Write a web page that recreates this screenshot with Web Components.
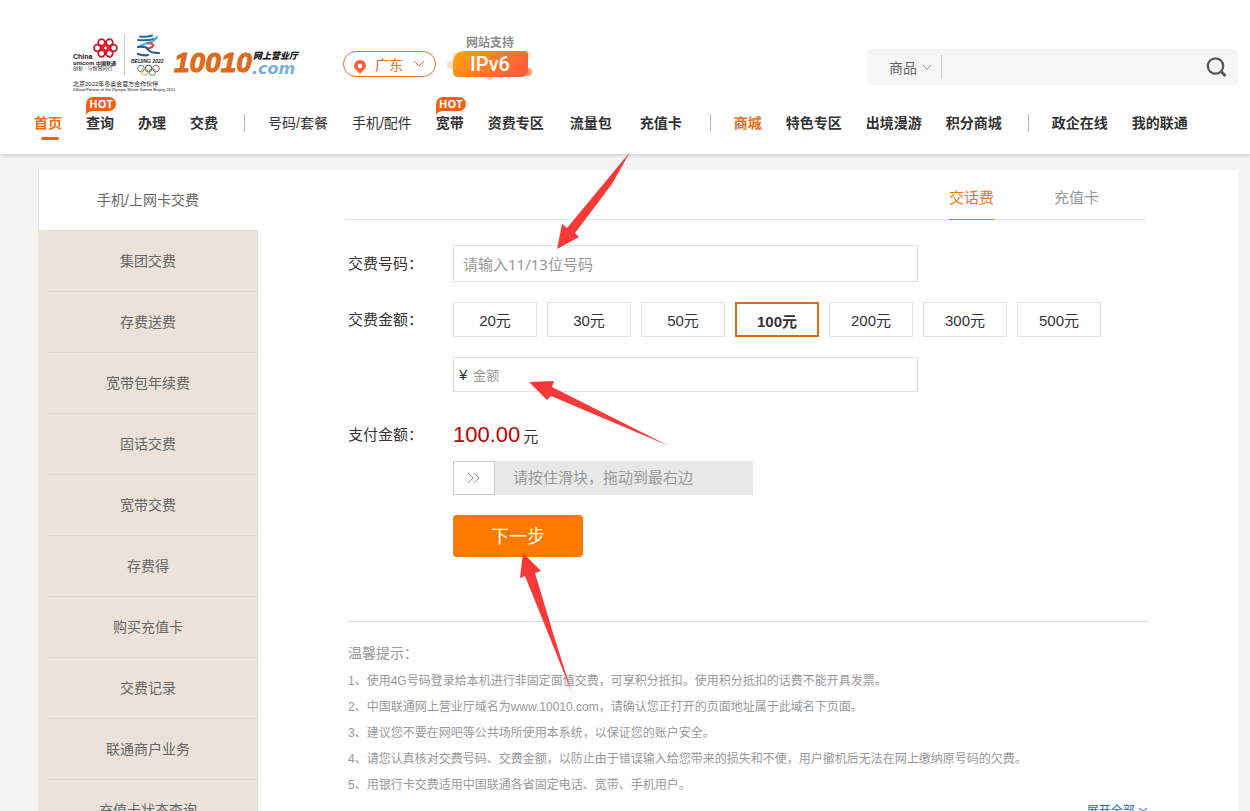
<!DOCTYPE html>
<html lang="zh-CN">
<head>
<meta charset="utf-8">
<title>中国联通网上营业厅 - 交费充值</title>
<style>
html{scrollbar-width:none}
body{margin:0;position:relative;background:#f4f4f4;color:#333;font:14px/20px "Liberation Sans","Noto Sans CJK SC",sans-serif}
</style>
</head>
<body>
<site-header></site-header>
<pay-layout>
  <side-menu slot="side"></side-menu>
  <pay-tabs></pay-tabs>
  <pay-form></pay-form>
  <pay-tips></pay-tips>
</pay-layout>
<guide-arrows></guide-arrows>

<script>
const define = (name, html, ready) => customElements.define(name, class extends HTMLElement {
  constructor() {
    super();
    const t = document.createElement('template');
    t.innerHTML = html;
    this.attachShadow({mode: 'open'}).append(t.content.cloneNode(true));
  }
  connectedCallback() { if (ready) ready(this.shadowRoot, this); }
});

define('brand-logo', `
<style>
:host{display:flex;align-items:flex-start}
.rings{display:block;overflow:visible}
.site{display:grid;grid-template-columns:auto auto;column-gap:1px;margin:18px 0 0 6px;text-decoration:none}
.num{grid-row:1 / 3;font:italic bold 28px/26px "Liberation Sans",sans-serif;color:#dd6b18;-webkit-text-stroke:1px #dd6b18}
.cn{font:italic 900 9px/12px "Noto Sans CJK SC",sans-serif;color:#111}
.com{font:italic bold 16px/14px "DejaVu Sans",sans-serif;color:#78aeda;margin-left:-1px}
</style>
<svg class="rings" width="96" height="62" viewBox="72 32 96 62" role="img" aria-label="中国联通 北京2022">
  <g fill="none" stroke="#d8142c" stroke-width="1.7">
    <circle cx="101.500" cy="42.500" r="3.300"/><circle cx="109.500" cy="42.500" r="3.300"/>
    <circle cx="97.300" cy="48" r="3.300"/><circle cx="113.700" cy="48" r="3.300"/>
    <circle cx="101.500" cy="53.500" r="3.300"/><circle cx="109.500" cy="53.500" r="3.300"/>
    <path d="M100 45l5.500 6 5.500-6M100 51l5.500-6 5.500 6M105.500 41v3M105.500 52v3"/>
  </g>
  <g fill="#222" font-family="Liberation Sans, Noto Sans CJK SC, sans-serif" font-weight="bold">
    <text x="73" y="59" font-size="7">China</text>
    <text x="73" y="65" font-size="6">unicom</text>
    <text x="96" y="65" font-size="5" font-family="Noto Sans CJK SC">中国联通</text>
    <text x="73" y="70" font-size="5" font-weight="normal">创新 · 与智慧同行</text>
    <text x="131" y="63" font-size="5" font-style="italic">BEIJING 2022</text>
    <text x="73" y="86" font-size="6" font-weight="normal">北京2022年冬奥会官方合作伙伴</text>
    <text x="73" y="91" font-size="4" font-weight="normal" font-family="Roboto">Official Partner of the Olympic Winter Games Beijing 2022</text>
  </g>
  <path d="M124.500 34v41" stroke="#ccc"/>
  <g fill="none" stroke-linecap="round">
    <path d="M140 36.500q7 1 12-1M138 40q9 1 16-1" stroke="#2468b4" stroke-width="2"/>
    <path d="M157 37q-3 5-9 6l-8 3" stroke="#48b6ce" stroke-width="2.400"/>
    <path d="M148 43q8 1 4 4l-5 2" stroke="#e84048" stroke-width="2"/>
    <path d="M138 47q8-1 10 2 1 4 11 4M138 54q6 2 10 1" stroke="#2458a8" stroke-width="2.200"/>
  </g>
  <g fill="none" stroke-width="1">
    <circle cx="141" cy="68.500" r="3.300" stroke="#3c80c0"/><circle cx="148.500" cy="68.500" r="3.300" stroke="#444"/><circle cx="156" cy="68.500" r="3.300" stroke="#d84850"/>
    <circle cx="144.700" cy="72" r="3.300" stroke="#e0ac38"/><circle cx="152.300" cy="72" r="3.300" stroke="#38a068"/>
  </g>
</svg>
<a class="site" href="#"><span class="num">10010</span><span class="cn">网上营业厅</span><span class="com">.com</span></a>`);

define('province-picker', `
<style>
:host{display:block}
button{display:flex;align-items:center;width:93px;height:26px;padding:0 10px;border:1px solid #e0703a;border-radius:13px;background:#fff;color:#e4682a;font:14px/20px "Noto Sans CJK SC",sans-serif;cursor:pointer}
span{margin:0 auto 0 9px}
.pin{margin-top:6px}
</style>
<button type="button"><svg class="pin" width="12" height="14" viewBox="0 0 12 14"><path fill="#f4633a" fill-rule="evenodd" d="M6 0a6 6 0 0 1 6 6c0 3-3 4.500-6 8-3-3.500-6-5-6-8a6 6 0 0 1 6-6zm0 3.800a2.200 2.200 0 1 0 0 4.400 2.200 2.200 0 0 0 0-4.400z"/></svg><span>广东</span><svg width="12" height="8" viewBox="0 0 12 8"><path d="M1 1l5 5 5-5" fill="none" stroke="#e0703a"/></svg></button>`);

define('ipv6-badge', `
<style>
:host{display:grid;justify-items:center;width:88px}
small{font:bold 12px/18px "Noto Sans CJK SC",sans-serif;color:#8c8c8c}
.b{display:grid;width:100%;height:31px}
svg,b{grid-area:1 / 1}
b{justify-self:center;font:500 20px/26px Roboto,sans-serif;color:#fff}
</style>
<small>网站支持</small>
<div class="b"><svg width="88" height="31" viewBox="0 0 88 31"><defs><linearGradient id="g" x2="1" y2=".4"><stop stop-color="#ffa60c"/><stop offset="1" stop-color="#ff5f3a"/></linearGradient></defs>
<g fill="#ffc99a"><circle cx="5" cy="14" r="4" opacity=".6"/><circle cx="8" cy="4" r="3" opacity=".3"/><circle cx="81" cy="4" r="4" opacity=".5"/><circle cx="82" cy="21" r="4" fill="#ff9a62"/><circle cx="44" cy="26" r="3"/></g>
<path fill="url(#g)" d="M19 0h59q4 0 4 4v15q0 7-7 7H12q-5 0-5-5v-8Q7 0 19 0z"/></svg><b>IPv6</b></div>`);

define('search-box', `
<style>
:host{display:block;width:371px}
form{display:flex;align-items:center;height:36px;background:#f6f6f6;border-radius:5px;margin:0}
.cat{display:grid;align-items:center;margin-left:22px;width:52px;height:24px;border-right:1px solid #ccc}
.cat>*{grid-area:1 / 1}
select{appearance:none;border:0;padding:0;margin:0;background:none;color:#666;font:14px/22px "Noto Sans CJK SC",sans-serif;width:44px}
.cat svg{justify-self:end;margin-right:9px;pointer-events:none}
input{flex:1;min-width:0;border:0;background:none;padding:0 10px;font:14px/22px "Liberation Sans",sans-serif;outline:0}
button{display:flex;border:0;background:none;padding:0;margin-right:11px;cursor:pointer}
</style>
<form role="search"><div class="cat"><select aria-label="搜索类别"><option>商品</option></select><svg width="10" height="7" viewBox="0 0 10 7"><path d="M1 1l4 4.500L9 1" fill="none" stroke="#999"/></svg></div>
<input type="text" aria-label="搜索"><button type="button" aria-label="搜索"><svg width="21" height="21" viewBox="0 0 21 21"><g fill="none" stroke="#555" stroke-width="2.200"><circle cx="9.500" cy="9" r="7.700"/><path d="M15 14.500l4.500 4.500" stroke-width="3"/></g></svg></button></form>`);

define('nav-item', `
<style>
:host{display:block;position:relative;font:bold 14px/20px "Liberation Sans","Noto Sans CJK SC",sans-serif;color:#333}
:host([plain]){font-weight:normal}
:host([accent]),:host([current]){color:#f26a10}
a{color:inherit;text-decoration:none;white-space:nowrap}
:host([current]) a::after{content:"";position:absolute;left:7px;bottom:-7px;width:18px;height:3px;border-radius:2px;background:#ee6413}
.hot{display:none;position:absolute;left:0;top:-16px;width:30px;height:18px}
:host([hot]) .hot{display:grid}
.hot>*{grid-area:1 / 1}
.hot b{font:bold 11px/14px "Open Sans",sans-serif;color:#fff;text-align:center}
</style>
<a href="#"><slot></slot></a><span class="hot"></span>`, (r, el) => {
  if (el.hasAttribute('hot')) r.querySelector('.hot').innerHTML = '<svg width="30" height="18" viewBox="0 0 30 18"><path fill="#fa5f0c" d="M7 0h16a7 7 0 0 1 0 14H8q-6 0-8 4V7a7 7 0 0 1 7-7z"/></svg><b>HOT</b>';
});

define('site-header', `
<style>
:host{display:block;position:relative;background:#fff;box-shadow:0 2px 3px rgba(0,0,0,.14)}
.top{display:flex;align-items:flex-start;height:81px;padding:32px 12px 0 72px}
brand-logo{width:226px}
province-picker{margin:19px 0 0 45px}
ipv6-badge{margin:1px 0 0 10px}
search-box{margin:17px 0 0 auto}
nav{display:flex;align-items:center;gap:24px;height:20px;padding:0 0 21px 34px}
i{width:1px;height:18px;background:#bbb;margin:0 -1px 0 2px}
.mid{display:flex;gap:28px;margin:0 2px}
</style>
<div class="top"><brand-logo></brand-logo><province-picker></province-picker><ipv6-badge></ipv6-badge><search-box></search-box></div>
<nav><nav-item current>首页</nav-item><nav-item hot>查询</nav-item><nav-item>办理</nav-item><nav-item>交费</nav-item><i></i>
<nav-item plain>号码/套餐</nav-item><nav-item plain>手机/配件</nav-item><nav-item hot>宽带</nav-item><nav-item>资费专区</nav-item><div class="mid"><nav-item>流量包</nav-item><nav-item>充值卡</nav-item></div><i></i>
<nav-item accent>商城</nav-item><nav-item>特色专区</nav-item><nav-item>出境漫游</nav-item><nav-item>积分商城</nav-item><i></i>
<nav-item>政企在线</nav-item><nav-item>我的联通</nav-item></nav>`);

define('pay-layout', `
<style>
:host{display:block;padding:16px 12px 40px 38px}
main{display:flex;background:#fff}
aside{flex:none;width:220px}
section{flex:1;min-width:0;padding:0 90px 40px 87px}
</style>
<main><aside><slot name="side"></slot></aside><section><slot></slot></section></main>`);

define('side-menu', `
<style>
:host{display:block}
ul{list-style:none;margin:0;padding:0;background:#ebe3d9}
li{padding-left:10px}
a{display:block;padding-right:10px;border-top:1px solid #dfd6cb;line-height:60px;text-align:center;color:#666;text-decoration:none}
.on{background:#fff;box-shadow:inset 1px 0 #e4e4e4}
.on a{border:0}
</style><ul></ul>`, r => {
  r.querySelector('ul').innerHTML = ['手机/上网卡交费','集团交费','存费送费','宽带包年续费','固话交费','宽带交费','存费得','购买充值卡','交费记录','联通商户业务','充值卡状态查询']
    .map((t, i) => `<li${i ? '' : ' class="on"'}><a href="#">${t}</a></li>`).join('');
});

define('pay-tabs', `
<style>
:host{display:block;margin-right:3px}
nav{display:flex;justify-content:flex-end;gap:60px;height:49px;padding-right:46px;border-bottom:1px solid #e5e5e5}
a{font-size:15px;line-height:56px;height:49px;color:#999;text-decoration:none}
.on{color:#f0750f;border-bottom:1px solid #e8700f}
</style><nav><a class="on" href="#">交话费</a><a href="#">充值卡</a></nav>`);

define('pay-form', `
<style>
:host{display:block;margin-left:3px;padding:25px 0 64px;border-bottom:1px solid #e0e0e0}
form{display:grid;grid-template-columns:105px 1fr;row-gap:20px;margin:0;font-size:15px}
.l{align-self:center;color:#333}
.c{grid-column:2}
input[type=text]{box-sizing:border-box;width:100%;border:0;background:none;outline:0;font:15px/20px "Noto Sans","Noto Sans CJK SC",sans-serif;color:#333;padding:0}
input::placeholder{color:#999;opacity:1}
.box{box-sizing:border-box;display:flex;align-items:center;max-width:465px;height:37px;border:1px solid #e0e0e0;padding:0 9px}
.sum{height:35px;padding:0 5px;gap:6px}
.sum input{font-size:13px}
.opts{display:flex;gap:10px}
.opts label{box-sizing:border-box;width:84px;height:35px;border:1px solid #e5e5e5;line-height:35px;text-align:center;cursor:pointer}
.opts input{appearance:none;position:absolute;margin:0;width:0;height:0}
.opts label:has(:checked){border:2px solid #dd6b18;font-weight:bold}
.total{box-sizing:border-box;height:29px;padding-top:8px;line-height:29px}
.pay{display:flex;align-items:baseline;gap:3px}
.pay output{font-size:22px;color:#c00000}
.drag{display:grid;align-items:center;width:300px;height:34px;background:#e8e8e8}
.drag>*{grid-area:1 / 1}
.drag label{color:#999;padding-left:60px;pointer-events:none}
.drag input{appearance:none;width:100%;height:34px;margin:0;background:none}
.drag input::-webkit-slider-thumb{appearance:none;box-sizing:border-box;width:42px;height:34px;background:#fff;border:1px solid #ccc}
.drag svg{margin-left:14px;pointer-events:none;z-index:1}
button{width:130px;height:42px;padding:0 0 3px;border:0;border-radius:4px;background:#ff7800;color:#fff;font:18px/24px "Noto Sans CJK SC",sans-serif;cursor:pointer}
</style>
<form>
<label class="l" for="phone">交费号码：</label><div class="box"><input id="phone" type="text" placeholder="请输入11/13位号码"></div>
<span class="l" id="al">交费金额：</span><div class="opts" role="radiogroup" aria-labelledby="al"></div>
<label class="c box sum"><span>¥</span><input type="text" placeholder="金额" aria-label="金额"></label>
<span class="l total">支付金额：</span><div class="pay total"><output>100.00</output><span>元</span></div>
<div class="c drag"><input id="drag" type="range" min="0" max="100" value="0"><label for="drag">请按住滑块，拖动到最右边</label><svg width="14" height="12" viewBox="0 0 14 12"><path d="M1 1l5 5-5 5M7 1l5 5-5 5" fill="none" stroke="#999"/></svg></div>
<div class="c"><button type="button">下一步</button></div>
</form>`, r => {
  r.querySelector('.opts').innerHTML = [20, 30, 50, 100, 200, 300, 500]
    .map(n => `<label><input type="radio" name="amount" value="${n}"${n === 100 ? ' checked' : ''}>${n}元</label>`).join('');
  r.querySelector('.opts').addEventListener('change', e => { r.querySelector('output').value = Number(e.target.value).toFixed(2); });
});

define('pay-tips', `
<style>
:host{display:block;margin-left:3px;padding-top:18px;color:#999}
h2{margin:0;font-size:14px;line-height:26px;font-weight:normal}
ul{list-style:none;margin:2px 0 0;padding:0;font-size:12px;line-height:26px}
div{display:flex;justify-content:flex-end}
a{font-size:12px;line-height:26px;color:#2a5cc0;text-decoration:none}
</style>
<h2>温馨提示：</h2>
<ul>
<li>1、使用4G号码登录给本机进行非固定面值交费，可享积分抵扣。使用积分抵扣的话费不能开具发票。</li>
<li>2、中国联通网上营业厅域名为www.10010.com，请确认您正打开的页面地址属于此域名下页面。</li>
<li>3、建议您不要在网吧等公共场所使用本系统，以保证您的账户安全。</li>
<li>4、请您认真核对交费号码、交费金额，以防止由于错误输入给您带来的损失和不便，用户撤机后无法在网上缴纳原号码的欠费。</li>
<li>5、用银行卡交费适用中国联通各省固定电话、宽带、手机用户。</li>
</ul>
<div><a href="#">展开全部 <svg width="10" height="8" viewBox="0 0 10 8"><path d="M1 1l4 3 4-3M1 4l4 3 4-3" fill="none" stroke="#2a5cc0"/></svg></a></div>`);

define('guide-arrows', `
<style>
:host{display:block;position:absolute;left:0;top:0;pointer-events:none}
svg{display:block}
</style>
<svg width="700" height="700" viewBox="0 0 700 700" fill="#fb3838"><path d="M630 152L567 228l-5-4-5 25 22-12-4-4L612 184z"/><path d="M669 446L552 387l2-6-25 1 18 18 4-4z"/><path d="M572 693L553 633 535 573l6-2-18-18-3 25 5-2L548 633z"/></svg>`);
</script>
</body>
</html>
